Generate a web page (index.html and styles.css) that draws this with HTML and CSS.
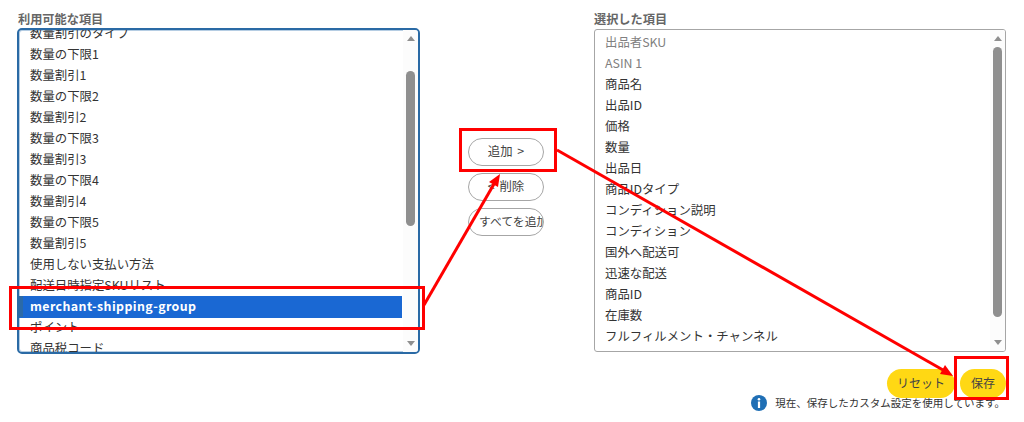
FILE: index.html
```html
<!DOCTYPE html>
<html lang="ja">
<head>
    <meta charset="UTF-8">
    <meta name="viewport" content="width=device-width, initial-scale=1.0">
    <title>カスタム設定</title>
    <link rel="stylesheet" href="styles.css">
</head>
<body>
    <div class="page">
        <div class="column column-left">
            <div class="list-label">利用可能な項目</div>
            <div class="list-box list-box-focus">
                <ul class="items items-left">
                    <li>数量割引のタイプ</li>
                    <li>数量の下限1</li>
                    <li>数量割引1</li>
                    <li>数量の下限2</li>
                    <li>数量割引2</li>
                    <li>数量の下限3</li>
                    <li>数量割引3</li>
                    <li>数量の下限4</li>
                    <li>数量割引4</li>
                    <li>数量の下限5</li>
                    <li>数量割引5</li>
                    <li>使用しない支払い方法</li>
                    <li>配送日時指定SKUリスト</li>
                    <li class="selected">merchant-shipping-group</li>
                    <li>ポイント</li>
                    <li>商品税コード</li>
                </ul>
                <div class="scrollbar">
                    <span class="arrow arrow-up"></span>
                    <span class="thumb thumb-left"></span>
                    <span class="arrow arrow-down"></span>
                </div>
            </div>
        </div>

        <div class="actions">
            <button class="pill">追加 &gt;</button>
            <button class="pill">&lt; 削除</button>
            <button class="pill pill-clip"><span>すべてを追加</span></button>
        </div>

        <div class="column column-right">
            <div class="list-label">選択した項目</div>
            <div class="list-box">
                <ul class="items items-right">
                    <li class="locked">出品者SKU</li>
                    <li class="locked">ASIN 1</li>
                    <li>商品名</li>
                    <li>出品ID</li>
                    <li>価格</li>
                    <li>数量</li>
                    <li>出品日</li>
                    <li>商品IDタイプ</li>
                    <li>コンディション説明</li>
                    <li>コンディション</li>
                    <li>国外へ配送可</li>
                    <li>迅速な配送</li>
                    <li>商品ID</li>
                    <li>在庫数</li>
                    <li>フルフィルメント・チャンネル</li>
                    <li>出品者</li>
                </ul>
                <div class="scrollbar">
                    <span class="arrow arrow-up"></span>
                    <span class="thumb thumb-right"></span>
                    <span class="arrow arrow-down"></span>
                </div>
            </div>
            <div class="save-row">
                <button class="yellow yellow-reset">リセット</button>
                <button class="yellow yellow-save">保存</button>
            </div>
            <div class="status">
                <svg class="info-icon" viewBox="0 0 16 16" width="16" height="16">
                    <circle cx="8" cy="8" r="8" fill="#1f6fb5"/>
                    <circle cx="8" cy="4.2" r="1.3" fill="#fff"/>
                    <rect x="6.9" y="6.5" width="2.2" height="6.5" fill="#fff"/>
                </svg>
                <span>現在、保存したカスタム設定を使用しています。</span>
            </div>
        </div>
    </div>

    <!-- red annotations on top of the screenshot -->
    <div class="mark mark-row"></div>
    <div class="mark mark-add"></div>
    <div class="mark mark-save"></div>
    <svg class="arrows" viewBox="0 0 1024 422" width="1024" height="422">
        <line x1="424" y1="305" x2="494" y2="184" stroke="#f00" stroke-width="3"/>
        <polygon points="500,174 498,187 489,182" fill="#f00"/>
        <line x1="557" y1="150" x2="943" y2="370" stroke="#f00" stroke-width="3"/>
        <polygon points="953,376 940,374 945,365" fill="#f00"/>
    </svg>
</body>
</html>
```

FILE: styles.css
```css
body {
    margin: 0;
    background: #fff;
    color: #333;
    font-family: "Noto Sans CJK JP", "Noto Sans", sans-serif;
    font-size: 12.4px;
    overflow: hidden;
}

.page {
    display: flex;
    padding: 10px 18px 0 17px;
    height: 411px;
    box-sizing: border-box;
}

.column-left {
    width: 403px;
}

.column-left .list-label {
    padding-left: 1px;
}

.column-right {
    width: 412px;
}

.list-label {
    font-size: 12.2px;
    font-weight: 700;
    color: #666;
    line-height: 18px;
}

.list-box {
    position: relative;
    height: 323px;
    margin-top: 1px;
    border: 1px solid #a6a6a6;
    border-radius: 3px;
    overflow: hidden;
    box-sizing: border-box;
}

.list-box-focus {
    height: 326px;
    margin-top: 0;
    border: 2px solid #2a6aa5;
    border-radius: 5px;
    box-shadow: inset 0 0 0 1px #b5cde3;
}

.items {
    list-style: none;
    margin: 0;
    padding: 0;
}

.items li {
    height: 21px;
    line-height: 21px;
    padding-left: 10px;
    white-space: nowrap;
}

.items-left {
    margin-top: -7px;
    margin-right: 16px;
}

.items-left li {
    padding-left: 11px;
}

.items-right {
    margin-top: 2px;
    margin-right: 16px;
}

.items-left .selected {
    background: #1a68d3;
    border-left: 4px solid #2b6aa8;
    box-shadow: 0 1px 0 #1a68d3;
    padding-left: 7px;
    color: #fff;
    font-weight: 700;
    letter-spacing: 0.4px;
}

.items .locked {
    color: #808080;
}

.scrollbar {
    position: absolute;
    top: 0;
    right: 0;
    bottom: 0;
    width: 15px;
    background: #fcfcfc;
}

.thumb {
    position: absolute;
    right: 3px;
    width: 9px;
    background: #8f8f8f;
    border-radius: 5px;
}

.thumb-left {
    top: 41px;
    height: 155px;
}

.thumb-right {
    top: 17px;
    height: 270px;
}

.arrow {
    position: absolute;
    right: 3px;
    width: 0;
    height: 0;
    border-left: 4px solid transparent;
    border-right: 4px solid transparent;
}

.arrow-up {
    top: 6px;
    border-bottom: 5px solid #8f8f8f;
}

.arrow-down {
    bottom: 6px;
    border-top: 5px solid #8f8f8f;
}

.actions {
    display: flex;
    flex-direction: column;
    gap: 7px;
    width: 76px;
    margin: 128px 50px 0 48px;
}

.pill {
    width: 76px;
    height: 28px;
    padding: 0 0 3px;
    background: #fff;
    border: 1px solid #a6a6a6;
    border-radius: 14px;
    color: #444;
    font-family: inherit;
    font-size: 12.4px;
    word-spacing: 2px;
    overflow: hidden;
    white-space: nowrap;
}

.pill-clip {
    text-align: left;
    padding-left: 10px;
    font-size: 11.8px;
}

.save-row {
    display: flex;
    justify-content: flex-end;
    gap: 5px;
    margin-top: 17px;
}

.yellow {
    height: 29px;
    padding: 0 0 3px;
    background: #ffd814;
    border: none;
    border-radius: 15px;
    color: #444;
    font-family: inherit;
    font-size: 12px;
}

.yellow-reset {
    width: 68px;
}

.yellow-save {
    width: 46px;
}

.status {
    display: flex;
    align-items: center;
    justify-content: flex-end;
    gap: 8px;
    margin-top: -3px;
    padding-right: 1px;
    font-size: 10.5px;
    color: #333;
    line-height: 16px;
    white-space: nowrap;
}

.mark {
    position: absolute;
    border: 3px solid #f00;
    box-sizing: border-box;
}

.mark-row {
    left: 9px;
    top: 286px;
    width: 416px;
    height: 44px;
}

.mark-add {
    left: 459px;
    top: 128px;
    width: 98px;
    height: 44px;
}

.mark-save {
    left: 954px;
    top: 356px;
    width: 55px;
    height: 44px;
}

.arrows {
    position: absolute;
    left: 0;
    top: 0;
}
```
